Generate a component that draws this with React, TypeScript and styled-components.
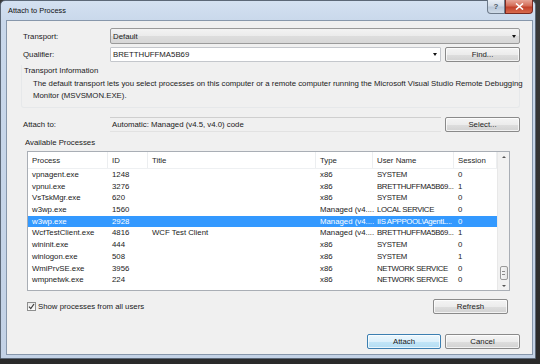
import * as React from 'react';
import styled, { createGlobalStyle } from 'styled-components';

const FONT = '"Liberation Sans", Arial, sans-serif';

const GlobalStyle = createGlobalStyle`
  html, body {
    margin: 0;
    padding: 0;
    background: #262626;
  }
  body {
    font-family: ${FONT};
    font-size: 7.8px;
    color: #1a1a1a;
  }
`;

const Screen = styled.div`
  width: 540px;
  height: 364px;
  overflow: hidden;
  background: linear-gradient(180deg, #3a3a3a 0%, #2a2a2a 100%);
`;

const Window = styled.div`
  width: 536px;
  height: 359px;
  box-sizing: border-box;
  border: 1px solid #5c6877;
  border-radius: 5px 5px 0 0;
  background: linear-gradient(180deg, #d4e1f1 0%, #c9d8eb 20px, #c3d2e6 100%);
  display: flex;
  flex-direction: column;
  padding: 0 2px 3px 5px;
`;

const TitleBar = styled.div`
  height: 19px;
  display: flex;
  align-items: flex-start;
  justify-content: space-between;
`;

const Title = styled.div`
  font-size: 7.4px;
  color: #111;
  line-height: 19px;
  padding-left: 2px;
`;

const Captions = styled.div`
  display: flex;
  margin-top: -1px;
`;

const CaptionButton = styled.div<{ $close?: boolean }>`
  width: ${(p) => (p.$close ? '28px' : '18px')};
  height: 14px;
  box-sizing: border-box;
  border: 1px solid ${(p) => (p.$close ? '#7a2a22' : '#6d7a8a')};
  border-top: none;
  border-radius: 0 0 ${(p) => (p.$close ? '4px 0' : '0 4px')};
  background: ${(p) =>
    p.$close
      ? 'linear-gradient(180deg, #e7a597 0%, #d46c57 45%, #c2412b 55%, #d86b4e 100%)'
      : 'linear-gradient(180deg, #e8eef5 0%, #d2dce8 45%, #bac8d9 55%, #cfdbe8 100%)'};
  display: flex;
  align-items: center;
  justify-content: center;
  color: ${(p) => (p.$close ? '#fff' : '#4b5766')};
  font-size: 8px;
  font-weight: bold;
`;

const Client = styled.div`
  flex: 1;
  background: #f0f0f0;
  border: 1px solid #8797ab;
  display: flex;
  flex-direction: column;
  padding: 7px 12px 0 16px;
`;

const FieldRow = styled.div<{ $top: number }>`
  display: grid;
  grid-template-columns: 84px 1fr auto;
  column-gap: 4px;
  align-items: center;
  height: 15px;
  margin-top: ${(p) => p.$top}px;
`;

const Label = styled.div`
  line-height: 15px;
  white-space: nowrap;
`;

const ComboBox = styled.div<{ $editable?: boolean; $span?: boolean }>`
  grid-column: ${(p) => (p.$span ? '2 / 4' : 'auto')};
  height: ${(p) => (p.$span ? 16 : 15)}px;
  box-sizing: border-box;
  border: 1px solid ${(p) => (p.$editable ? '#c4c7cc' : '#9a9a9a')};
  border-radius: ${(p) => (p.$editable ? '1px' : '2px')};
  background: ${(p) =>
    p.$editable ? '#fff' : 'linear-gradient(180deg, #f3f3f3 0%, #ebebeb 50%, #dddddd 51%, #d7d7d7 100%)'};
  display: flex;
  align-items: center;
  justify-content: space-between;
  padding: 0 3px 0 2px;
  margin-left: -1px;
`;

const Arrow = styled.span`
  width: 0;
  height: 0;
  border-left: 2.5px solid transparent;
  border-right: 2.5px solid transparent;
  border-top: 3px solid #111;
`;

const ReadOnlyField = styled.div`
  height: 15px;
  box-sizing: border-box;
  border-top: 1px solid #cfcfcf;
  border-bottom: 1px solid #e2e2e2;
  display: flex;
  align-items: center;
  padding-left: 2px;
  margin-left: -1px;
`;

const Button = styled.div<{ $default?: boolean; $width?: number }>`
  width: ${(p) => p.$width ?? 75}px;
  height: 15px;
  box-sizing: border-box;
  border: 1px solid ${(p) => (p.$default ? '#3c7fb1' : '#8a8a8a')};
  border-radius: 2px;
  background: ${(p) =>
    p.$default
      ? 'linear-gradient(180deg, #ecf7fd 0%, #dcf0fb 50%, #c2e5f7 51%, #b3ddf3 100%)'
      : 'linear-gradient(180deg, #f4f4f4 0%, #ececec 50%, #dedede 51%, #d2d2d2 100%)'};
  box-shadow: inset 0 0 0 1px rgba(255, 255, 255, 0.7);
  display: flex;
  align-items: center;
  justify-content: center;
`;

const Group = styled.div<{ $top: number }>`
  margin-top: ${(p) => p.$top}px;
  margin-left: -2px;
  border: 1px solid #e6e8ea;
  border-top: none;
  border-radius: 0 0 3px 3px;
  padding: 0 0 5px 11px;
`;

const GroupTitle = styled.div`
  line-height: 11px;
  margin-left: -9px;
  margin-bottom: 2px;
`;

const InfoText = styled.div`
  line-height: 12px;
  white-space: nowrap;
`;

const SectionTitle = styled.div<{ $top: number }>`
  margin-top: ${(p) => p.$top}px;
  margin-left: 2px;
  line-height: 10px;
`;

const ListBox = styled.div`
  margin-top: 3px;
  margin-left: 4px;
  width: 483px;
  height: 140px;
  box-sizing: border-box;
  border: 1px solid #a9aeb5;
  background: #fff;
  display: flex;
  overflow: hidden;
`;

const ListBody = styled.div`
  width: 469px;
  display: flex;
  flex-direction: column;
`;

const COLUMNS = '80px 40px 168px 57px 81px 43px';

const HeaderRow = styled.div`
  display: grid;
  grid-template-columns: ${COLUMNS};
  height: 17px;
  box-sizing: border-box;
  border-bottom: 1px solid #eef0f2;
  align-items: center;
`;

const HeaderCell = styled.div`
  padding-left: 4px;
  height: 100%;
  display: flex;
  align-items: center;
  border-right: 1px solid #eceef0;
  color: #262626;
`;

const Row = styled.div<{ $selected?: boolean }>`
  display: grid;
  grid-template-columns: ${COLUMNS};
  height: 11.7px;
  align-items: center;
  background: ${(p) => (p.$selected ? '#3399ff' : 'transparent')};
  color: ${(p) => (p.$selected ? '#fff' : '#1a1a1a')};
`;

const Cell = styled.div<{ $tight?: boolean }>`
  padding-left: 4px;
  white-space: nowrap;
  line-height: 11.7px;
  letter-spacing: ${(p) => (p.$tight ? '-0.35px' : '0')};
`;

const ScrollBar = styled.div`
  width: 12px;
  background: #f2f2f2;
  border-left: 1px solid #e8e8e8;
  display: flex;
  flex-direction: column;
  align-items: center;
  justify-content: space-between;
  padding: 4px 0 3px;
  box-sizing: border-box;
`;

const ScrollArrow = styled.span<{ $up?: boolean }>`
  width: 0;
  height: 0;
  border-left: 2px solid transparent;
  border-right: 2px solid transparent;
  ${(p) => (p.$up ? 'border-bottom: 2.5px solid #555;' : 'border-top: 2.5px solid #555;')}
`;

const ScrollLower = styled.div`
  display: flex;
  flex-direction: column;
  align-items: center;
  gap: 5px;
`;

const Thumb = styled.div`
  width: 8px;
  height: 14px;
  box-sizing: border-box;
  border: 1px solid #9a9a9a;
  border-radius: 2px;
  background: linear-gradient(90deg, #f6f6f6 0%, #e6e6e6 100%);
  display: flex;
  align-items: center;
  justify-content: center;
`;

const Grip = styled.div`
  width: 3px;
  height: 4px;
  border-top: 1px solid #8a8a8a;
  border-bottom: 1px solid #8a8a8a;
  box-sizing: border-box;
`;

const OptionsRow = styled.div`
  display: flex;
  align-items: center;
  justify-content: space-between;
  margin-top: 8px;
  margin-left: 4px;
  width: 481px;
`;

const CheckLabel = styled.label`
  display: flex;
  align-items: center;
  gap: 2px;
`;

const CheckBox = styled.span`
  width: 9px;
  height: 9px;
  box-sizing: border-box;
  border: 1px solid #8e8f8f;
  background: linear-gradient(180deg, #eaeaea 0%, #fdfdfd 100%);
  display: flex;
  align-items: center;
  justify-content: center;
`;

const Footer = styled.div`
  display: flex;
  justify-content: flex-end;
  gap: 4px;
  margin-top: 20px;
`;

type Proc = [string, string, string, string, string, string];

const processes: Proc[] = [
  ['vpnagent.exe', '1248', '', 'x86', 'SYSTEM', '0'],
  ['vpnui.exe', '3276', '', 'x86', 'BRETTHUFFMA5B69...', '1'],
  ['VsTskMgr.exe', '620', '', 'x86', 'SYSTEM', '0'],
  ['w3wp.exe', '1560', '', 'Managed (v4....', 'LOCAL SERVICE', '0'],
  ['w3wp.exe', '2928', '', 'Managed (v4....', 'IIS APPPOOL\\AgentL...', '0'],
  ['WcfTestClient.exe', '4816', 'WCF Test Client', 'Managed (v4....', 'BRETTHUFFMA5B69...', '1'],
  ['wininit.exe', '444', '', 'x86', 'SYSTEM', '0'],
  ['winlogon.exe', '508', '', 'x86', 'SYSTEM', '1'],
  ['WmiPrvSE.exe', '3956', '', 'x86', 'NETWORK SERVICE', '0'],
  ['wmpnetwk.exe', '224', '', 'x86', 'NETWORK SERVICE', '0'],
];

const headers = ['Process', 'ID', 'Title', 'Type', 'User Name', 'Session'];

const App = () => {
  const [selected, setSelected] = React.useState(4);
  const [allUsers, setAllUsers] = React.useState(true);

  return (
    <Screen>
      <GlobalStyle />
      <Window>
        <TitleBar>
          <Title>Attach to Process</Title>
          <Captions>
            <CaptionButton>?</CaptionButton>
            <CaptionButton $close>
              <svg width="9" height="7" viewBox="0 0 9 7">
                <path d="M1 0.5 L8 6.5 M8 0.5 L1 6.5" stroke="#fff" strokeWidth="1.6" />
              </svg>
            </CaptionButton>
          </Captions>
        </TitleBar>
        <Client>
          <FieldRow $top={0}>
            <Label>Transport:</Label>
            <ComboBox $span>
              <span>Default</span>
              <Arrow />
            </ComboBox>
          </FieldRow>
          <FieldRow $top={4}>
            <Label>Qualifier:</Label>
            <ComboBox $editable>
              <span>BRETTHUFFMA5B69</span>
              <Arrow />
            </ComboBox>
            <Button>Find...</Button>
          </FieldRow>
          <Group $top={3}>
            <GroupTitle>Transport Information</GroupTitle>
            <InfoText>
              The default transport lets you select processes on this computer or a remote computer running the
              Microsoft Visual Studio Remote Debugging
            </InfoText>
            <InfoText>Monitor (MSVSMON.EXE).</InfoText>
          </Group>
          <FieldRow $top={9}>
            <Label>Attach to:</Label>
            <ReadOnlyField>Automatic: Managed (v4.5, v4.0) code</ReadOnlyField>
            <Button>Select...</Button>
          </FieldRow>
          <SectionTitle $top={6}>Available Processes</SectionTitle>
          <ListBox>
            <ListBody>
              <HeaderRow>
                {headers.map((h) => (
                  <HeaderCell key={h}>{h}</HeaderCell>
                ))}
              </HeaderRow>
              {processes.map((p, i) => (
                <Row key={p[1]} $selected={i === selected} onClick={() => setSelected(i)}>
                  {p.map((c, j) => (
                    <Cell key={j} $tight={j === 4}>
                      {c}
                    </Cell>
                  ))}
                </Row>
              ))}
            </ListBody>
            <ScrollBar>
              <ScrollArrow $up />
              <ScrollLower>
                <Thumb>
                  <Grip />
                </Thumb>
                <ScrollArrow />
              </ScrollLower>
            </ScrollBar>
          </ListBox>
          <OptionsRow>
            <CheckLabel onClick={() => setAllUsers(!allUsers)}>
              <CheckBox>
                {allUsers && (
                  <svg width="7" height="7" viewBox="0 0 7 7">
                    <path d="M1 3.6 L2.8 5.6 L6 1" stroke="#3d3d3d" strokeWidth="1.2" fill="none" />
                  </svg>
                )}
              </CheckBox>
              Show processes from all users
            </CheckLabel>
            <Button>Refresh</Button>
          </OptionsRow>
          <Footer>
            <Button $default $width={74}>
              Attach
            </Button>
            <Button>Cancel</Button>
          </Footer>
        </Client>
      </Window>
    </Screen>
  );
};

export default App;
